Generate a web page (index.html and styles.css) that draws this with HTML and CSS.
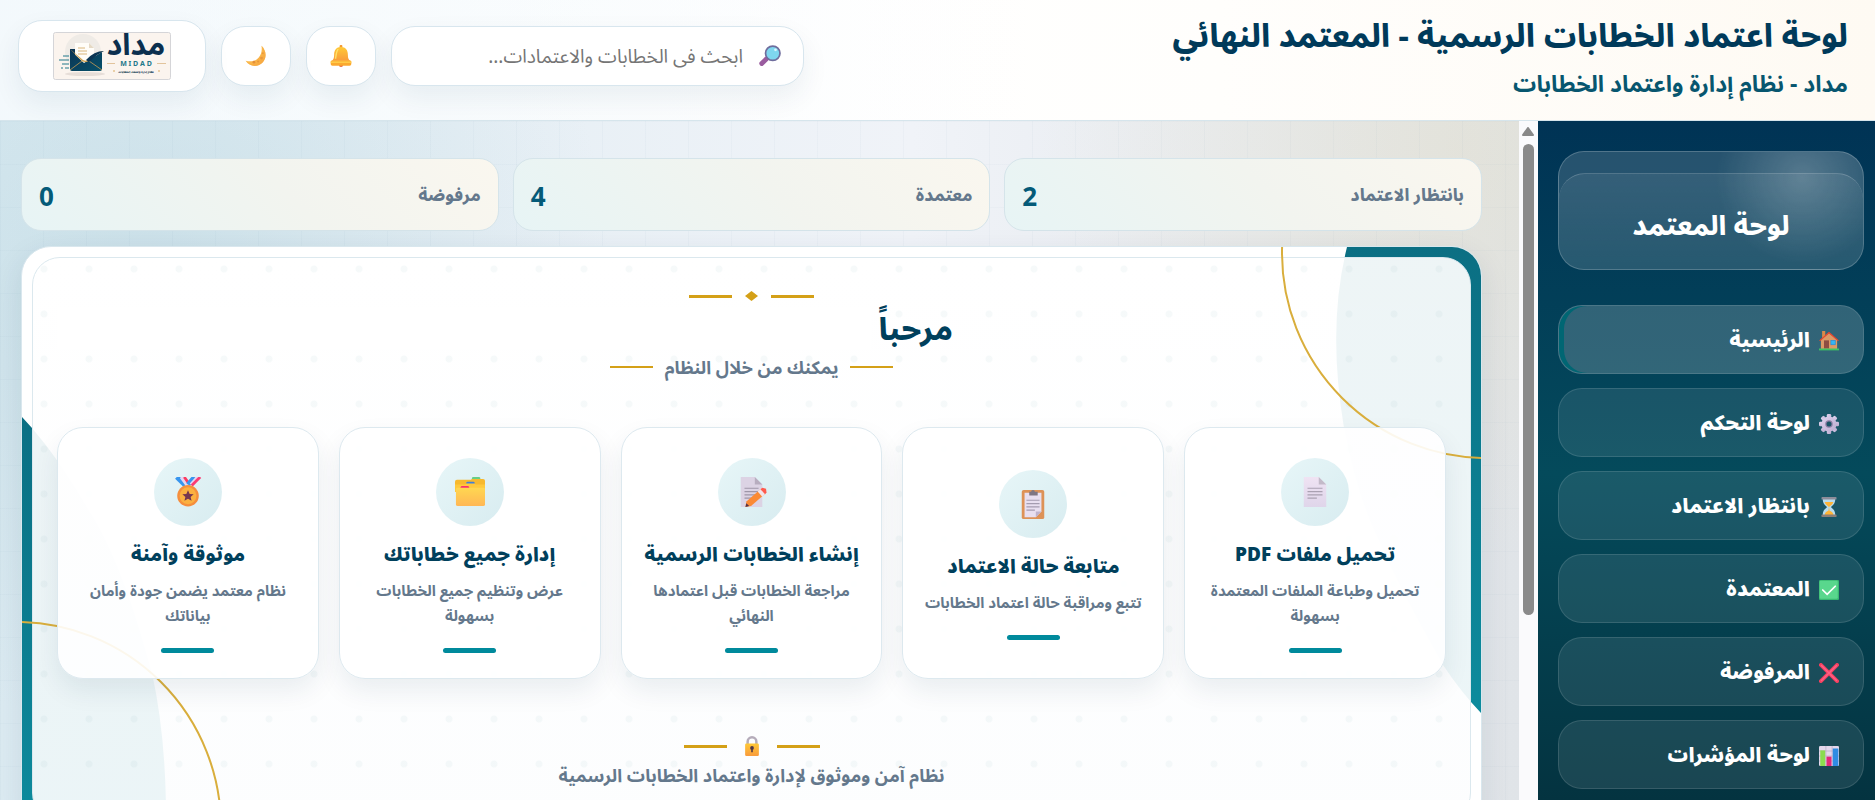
FILE: index.html
```
<!DOCTYPE html>
<html lang="ar" dir="rtl">
<head>
<meta charset="utf-8">
<title>لوحة اعتماد الخطابات الرسمية</title>
<link rel="stylesheet" href="styles.css">
</head>
<body>
<svg class="defs" aria-hidden="true">
  <defs>
    <linearGradient id="gold" x1="0" y1="0" x2="0" y2="1"><stop offset="0" stop-color="#ffc936"/><stop offset="1" stop-color="#f99b3c"/></linearGradient>
    <linearGradient id="folderfill" x1="0" y1="0" x2="0" y2="1"><stop offset="0" stop-color="#ffd751"/><stop offset="1" stop-color="#ffb755"/></linearGradient>
    <linearGradient id="moonfill" x1="0" y1="0" x2="1" y2="1"><stop offset="0" stop-color="#ffd35c"/><stop offset="1" stop-color="#f6a03c"/></linearGradient>
    <linearGradient id="paper" x1="0" y1="0" x2="0" y2="1"><stop offset="0" stop-color="#efe3f3"/><stop offset="1" stop-color="#dfd5ea"/></linearGradient>
    <linearGradient id="lilac" x1="0" y1="0" x2="1" y2="1"><stop offset="0" stop-color="#e0d3ee"/><stop offset="1" stop-color="#b9abcf"/></linearGradient>
    <linearGradient id="teal" x1="0" y1="0" x2="0" y2="1"><stop offset="0" stop-color="#0b6f83"/><stop offset="1" stop-color="#0d8b9d"/></linearGradient>
    <linearGradient id="navy" x1="0" y1="0" x2="1" y2="1"><stop offset="0" stop-color="#0b3554"/><stop offset="1" stop-color="#06506a"/></linearGradient>
  </defs>
  <symbol id="i-moon" viewBox="0 0 32 32"><path d="M24 1c7 7 8 17 2 24S7 33 1 23c9 2 15 0 19-5s5-10 4-17z" fill="url(#moonfill)"/><path d="M24 1c7 7 8 17 2 24S7 33 1 23c8 7 17 7 22 0s5-14 1-22z" fill="#f7ab45" opacity=".6"/><circle cx="13" cy="25" r="2" fill="#e58f3a"/><circle cx="24" cy="19" r="2" fill="#e9973c"/><circle cx="19" cy="24" r="1.5" fill="#e9973c"/><circle cx="26" cy="12" r="1.3" fill="#e9973c"/></symbol>
  <symbol id="i-bell" viewBox="0 0 32 32"><circle cx="16" cy="29" r="3" fill="#e9663c"/><rect x="14" y="0" width="4" height="6" rx="1.5" fill="#f59a2f"/><path d="M16 3C9 3 6 8 6 14c0 5-1 7-3 9h26c-2-2-3-4-3-9 0-6-3-11-10-11z" fill="url(#gold)"/><path d="M12 6c-3 3-3 9-4 14" stroke="#ffe26b" stroke-width="2" fill="none"/><rect x="1" y="22" width="30" height="8" rx="2.5" fill="#fba92f"/><path d="M1 25h30" stroke="#ffd14c" stroke-width="2"/></symbol>
  <symbol id="i-search" viewBox="0 0 32 32"><path d="M11 20l-7 7" stroke="#9a5c9f" stroke-width="7" stroke-linecap="round"/><circle cx="20" cy="12" r="10.5" fill="#7ed6ef" stroke="#6f6d9d" stroke-width="2.5"/><circle cx="24" cy="7" r="2" fill="#d8f5fd"/></symbol>
  <symbol id="i-home" viewBox="0 0 32 32"><rect x="5" y="0" width="5" height="12" fill="#d98a4a"/><path d="M3 14L16 3l13 11v15H3z" fill="#dc9a66"/><path d="M0 15L16 1l16 14-2 1L16 4 2 16z" fill="#e8472f"/><rect x="8" y="15" width="8" height="13" fill="#8f4e42"/><rect x="19" y="15" width="7" height="7" fill="#33b5f5" stroke="#2488d6"/><rect y="28" width="32" height="3" fill="#3fc463"/></symbol>
  <symbol id="i-gear" viewBox="0 0 32 32"><g fill="url(#lilac)"><rect x="12.500" y="0" width="7" height="32" rx="2"/><rect x="0" y="12.500" width="32" height="7" rx="2"/><rect x="12.500" y="0" width="7" height="32" rx="2" transform="rotate(45 16 16)"/><rect x="12.500" y="0" width="7" height="32" rx="2" transform="rotate(-45 16 16)"/><circle cx="16" cy="16" r="12"/></g><circle cx="16" cy="16" r="6" fill="#8c7fa5"/><circle cx="16" cy="16" r="4" fill="#1b5567"/></symbol>
  <symbol id="i-hourglass" viewBox="0 0 32 32"><path d="M6 3h20c0 8-4 10-7 13 3 3 7 5 7 13H6c0-8 4-10 7-13C10 13 6 11 6 3z" fill="#b8dcef"/><path d="M9 8h14c-1 4-4 5-7 8-3-3-6-4-7-8z" fill="#ffb536"/><path d="M16 16l1 6c4 1 6 4 6 7H9c0-3 2-6 6-7z" fill="#ffb536"/><rect x="4" y="0" width="24" height="4" rx="1" fill="#8d8c99"/><rect x="4" y="28" width="24" height="4" rx="1" fill="#8d7f77"/></symbol>
  <symbol id="i-check" viewBox="0 0 32 32"><rect width="32" height="32" rx="2" fill="#38b871"/><rect x="1" y="1" width="29" height="29" rx="2" fill="#59d78d"/><path d="M6 16l7 7L26 10" stroke="#fff" stroke-width="2.8" fill="none" stroke-linecap="round"/></symbol>
  <symbol id="i-cross" viewBox="0 0 32 32"><path d="M3 3l26 26M29 3L3 29" stroke="#f5405f" stroke-width="6" stroke-linecap="round"/><path d="M4 4l24 24M28 4L4 28" stroke="#ff5f86" stroke-width="2.5" stroke-linecap="round"/></symbol>
  <symbol id="i-chart" viewBox="0 0 32 32"><rect width="32" height="32" rx="2" fill="#e4d8ec"/><path d="M0 8h32M0 16h32M0 24h32M11 0v32M21 0v32" stroke="#b5a7c2"/><rect x="2" y="7" width="8" height="25" fill="#8bdc4f"/><rect x="12" y="17" width="8" height="15" fill="#e2297a"/><rect x="22" y="4" width="9" height="28" fill="#2f8ce3"/></symbol>
  <symbol id="i-page" viewBox="0 0 32 32"><path d="M4 0h16l8 8v24H4z" fill="url(#paper)"/><path d="M20 0l8 8h-8z" fill="#c3bac9"/><path d="M8 12h16M8 15.500h16M8 19h16M8 22.500h10" stroke="#aaa1b2" stroke-width="1.300"/></symbol>
  <symbol id="i-clipboard" viewBox="0 0 32 32"><rect x="4" y="1" width="24" height="31" rx="2" fill="#dd9257"/><path d="M7 4h18v20l-6 6H7z" fill="#e8dff0"/><path d="M25 24l-6 6v-6z" fill="#bfb3cd"/><path d="M12 7V3h2a2 2 0 0 1 4 0h3v4z" fill="#7e7683"/><path d="M9 12h14M9 15.500h14M9 19h14M9 22.500h9" stroke="#a49cb0" stroke-width="1.300"/></symbol>
  <symbol id="i-memo" viewBox="0 0 32 32"><path d="M4 0h15l8 8v24H4z" fill="#dcd3e4"/><path d="M19 0l8 8h-8z" fill="#b7adbf"/><path d="M8 12h15M8 15.500h15M8 19h12M8 22.500h8" stroke="#9e96a8" stroke-width="1.300"/><path d="M25 13l5 5-15 13-6 1 1-6z" fill="#fb8a35"/><path d="M22 15.500l4-3.500 5 5-4 4z" fill="#f2e4ea"/><path d="M25 13l2-1.500 4 1 .5 4-1.500 2z" fill="#ff5a4d"/><path d="M10 28l-1 4 4-1z" fill="#54324a"/></symbol>
  <symbol id="i-folder" viewBox="0 0 32 32"><rect x="18" y="0" width="9" height="5" rx="1.500" fill="#66cf86"/><path d="M0 5q0-2 2-2h15l1-1h12q2 0 2 2v10H0z" fill="#f7b92f"/><rect x="12" y="5" width="9" height="4" rx="1.500" fill="#3f7fd8"/><path d="M0 8h11l1-1h9l1 1h10v8H0z" fill="#ffc93c"/><rect x="6" y="9.500" width="9" height="4" rx="1.500" fill="#f8316d"/><path d="M1 13q0-1.500 1.500-1.500h28Q32 11.500 32 13v16q0 2-2 2H3q-2 0-2-2z" fill="url(#folderfill)"/></symbol>
  <symbol id="i-medal" viewBox="0 0 32 32"><path d="M4 0l9 9" stroke="#3795ee" stroke-width="5"/><path d="M9 0l6 8" stroke="#e6d6f3" stroke-width="4"/><path d="M12 0l5 7" stroke="#fb3c60" stroke-width="3"/><path d="M23 0l-7 8" stroke="#3795ee" stroke-width="5"/><path d="M26 0l-7 8" stroke="#e6d6f3" stroke-width="3"/><path d="M29 0l-9 9" stroke="#fb3c73" stroke-width="3"/><circle cx="16" cy="20" r="11.500" fill="#f58e3d"/><circle cx="16" cy="20" r="9" fill="#fbb040"/><path d="M16 14l1.800 4 4.200.4-3.200 2.800 1 4.200-3.800-2.200-3.800 2.200 1-4.200-3.200-2.800 4.200-.4z" fill="#76374f"/></symbol>
  <symbol id="i-lock" viewBox="0 0 32 32"><path d="M9 15V9a7 7 0 0 1 14 0v6" fill="none" stroke="#b5acba" stroke-width="4"/><rect x="5" y="12" width="22" height="20" rx="2" fill="url(#gold)"/><circle cx="16" cy="19" r="3" fill="#4d3546"/><path d="M16 19v7" stroke="#4d3546" stroke-width="2.500"/></symbol>
</svg>

<header class="topbar">
  <div class="heading">
    <h1 class="heading-title">لوحة اعتماد الخطابات الرسمية - المعتمد النهائي</h1>
    <p class="heading-sub">مداد - نظام إدارة واعتماد الخطابات</p>
  </div>
  <div class="tools">
    <label class="search"><svg class="ico"><use href="#i-search"/></svg><input type="search" aria-label="بحث" placeholder="ابحث في الخطابات والاعتمادات..."></label>
    <button class="tool" type="button" aria-label="الإشعارات"><svg class="ico"><use href="#i-bell"/></svg></button>
    <button class="tool" type="button" aria-label="الوضع الليلي"><svg class="ico"><use href="#i-moon"/></svg></button>
    <a class="brand" href="#" aria-label="مداد">
      <svg class="brand-img" viewBox="0 0 118 48" direction="ltr">
        <rect x=".5" y=".5" width="117" height="47" rx="2" fill="#fbf4ee" stroke="#d5d5d8"/>
        <circle cx="30" cy="20" r="18" fill="#efebe6"/>
        <path d="M17 17h5v6h-5z" fill="#0b3554"/>
        <path d="M22 11h14l5 5v16H22z" fill="#fffdf8"/><path d="M36 11l5 5h-5z" fill="#e5d9c5"/>
        <path d="M25 16h7M25 19h9M25 22h9" stroke="#dab67c"/>
        <path d="M17 18l14 13 18-11v17q0 2-2 2H19q-2 0-2-2z" fill="url(#navy)"/>
        <path d="M17 38l12-9M49 38l-13-9" stroke="#c79b52" stroke-width=".8"/>
        <path d="M17 17l12 12q3 2 7 0 8-8 15-10-7 1-13 7-4 4-8 2z" fill="#d3a350"/><path d="M33 28q8-9 18-9l-7 4-8 7z" fill="#0b3554"/>
        <path d="M10 24h6M6 28h10M9 32h7M8 36h2M12 36h4" stroke="#23788a" stroke-width="1"/>
        <ellipse cx="32" cy="42" rx="20" ry="2" fill="#e7ded8"/>
        <text class="brand-name" x="83" y="23">مداد</text>
        <path d="M54 31.500h8M104 31.500h9" stroke="#e2c49c"/>
        <text class="brand-latin" x="83" y="34">M I D A D</text>
        <text class="brand-tag" x="83" y="41">نظام إدارة واعتماد الخطابات</text>
        <circle cx="61" cy="39" r=".8" fill="#d3a350"/><circle cx="106" cy="39" r=".8" fill="#d3a350"/>
      </svg>
    </a>
  </div>
</header>

<div class="shell">
  <aside class="sidebar">
    <div class="hero"><div class="hero-inner">لوحة المعتمد</div></div>
    <nav class="nav">
      <a class="nav-item active" href="#"><svg class="nav-ico"><use href="#i-home"/></svg>الرئيسية</a>
      <a class="nav-item" href="#"><svg class="nav-ico"><use href="#i-gear"/></svg>لوحة التحكم</a>
      <a class="nav-item" href="#"><svg class="nav-ico"><use href="#i-hourglass"/></svg>بانتظار الاعتماد</a>
      <a class="nav-item" href="#"><svg class="nav-ico"><use href="#i-check"/></svg>المعتمدة</a>
      <a class="nav-item" href="#"><svg class="nav-ico"><use href="#i-cross"/></svg>المرفوضة</a>
      <a class="nav-item" href="#"><svg class="nav-ico"><use href="#i-chart"/></svg>لوحة المؤشرات</a>
    </nav>
  </aside>
  <div class="scroll" aria-hidden="true"><svg class="scroll-arrow" viewBox="0 0 12 9"><path d="M6 1l5 7H1z" fill="#888" stroke="#888" stroke-width="2" stroke-linejoin="round"/></svg><div class="scroll-thumb"></div></div>

  <main class="content">
    <section class="stats">
      <div class="stat"><span>بانتظار الاعتماد</span><strong class="stat-num">2</strong></div>
      <div class="stat"><span>معتمدة</span><strong class="stat-num">4</strong></div>
      <div class="stat"><span>مرفوضة</span><strong class="stat-num">0</strong></div>
    </section>

    <section class="panel">
      <svg class="corner corner-end" viewBox="0 0 220 480" aria-hidden="true"><path d="M86 0Q66 80 83 181Q96 250 118 294Q140 345 182 418Q200 445 220 466V0z" fill="url(#teal)"/></svg>
      <svg class="corner corner-start" viewBox="0 0 220 420" aria-hidden="true"><path d="M0 6L10 17Q40 52 68 101Q100 150 130 262Q145 330 144 420H0z" fill="url(#teal)"/></svg>
      <div class="sheet"></div>
      <div class="ring ring-end"></div>
      <div class="ring ring-start"></div>
      <div class="panel-body">
        <div class="rule"><i class="line"></i><svg class="diamond" viewBox="0 0 13 10"><path d="M6.500 0L13 5 6.500 10 0 5z" fill="#d4a017"/></svg><i class="line"></i></div>
        <h2 class="welcome">مرحباً<span class="welcome-name"></span></h2>
        <div class="intro"><i class="line thin"></i><span>يمكنك من خلال النظام</span><i class="line thin"></i></div>
        <div class="cards">
          <article class="card"><div class="disc"><svg class="disc-ico"><use href="#i-page"/></svg></div><h3 class="card-title">تحميل ملفات PDF</h3><p class="card-text">تحميل وطباعة الملفات المعتمدة بسهولة</p><i class="bar"></i></article>
          <article class="card"><div class="disc"><svg class="disc-ico"><use href="#i-clipboard"/></svg></div><h3 class="card-title">متابعة حالة الاعتماد</h3><p class="card-text">تتبع ومراقبة حالة اعتماد الخطابات</p><i class="bar"></i></article>
          <article class="card"><div class="disc"><svg class="disc-ico"><use href="#i-memo"/></svg></div><h3 class="card-title">إنشاء الخطابات الرسمية</h3><p class="card-text">مراجعة الخطابات قبل اعتمادها النهائي</p><i class="bar"></i></article>
          <article class="card"><div class="disc"><svg class="disc-ico"><use href="#i-folder"/></svg></div><h3 class="card-title">إدارة جميع خطاباتك</h3><p class="card-text">عرض وتنظيم جميع الخطابات بسهولة</p><i class="bar"></i></article>
          <article class="card"><div class="disc"><svg class="disc-ico"><use href="#i-medal"/></svg></div><h3 class="card-title">موثوقة وآمنة</h3><p class="card-text">نظام معتمد يضمن جودة وأمان بياناتك</p><i class="bar"></i></article>
        </div>
        <div class="rule secure"><i class="line"></i><svg class="lock"><use href="#i-lock"/></svg><i class="line"></i></div>
        <p class="closing">نظام آمن وموثوق لإدارة واعتماد الخطابات الرسمية</p>
      </div>
    </section>
  </main>
</div>
</body>
</html>
```
FILE: styles.css
```
* { box-sizing: border-box; }
body {
  margin: 0;
  height: 100vh;
  overflow: hidden;
  display: flex;
  flex-direction: column;
  font-family: "Noto Sans", "Noto Sans Arabic", "Noto Kufi Arabic", "DejaVu Sans", sans-serif;
  color: #00405c;
}
h1, h2, h3, p { margin: 0; }
.defs { position: absolute; width: 0; height: 0; }

.topbar {
  flex: none;
  display: flex;
  justify-content: space-between;
  align-items: flex-start;
  height: 121px;
  padding: 13px 27px 0 18px;
  border-bottom: 1px solid #d6e5ec;
  background: linear-gradient(90deg, rgba(240, 246, 250, .6), rgba(240, 246, 250, 0) 55%), linear-gradient(90deg, #f8fdff, #fff 45%, #fffefc 65%, #fefaf3);
}
.heading-title { font-size: 32px; line-height: 44px; font-weight: 800; color: #003a5a; }
.heading-sub { margin-top: 10px; font-size: 23px; line-height: 32px; font-weight: 700; color: #07566f; }
.tools { display: flex; align-items: center; gap: 15px; padding-top: 7px; }
.search, .tool, .brand {
  display: flex;
  align-items: center;
  justify-content: center;
  background: #fff;
  border: 1px solid #d8e6ee;
  border-radius: 24px;
  box-shadow: 0 12px 28px rgba(10, 50, 80, .07);
}
.search { width: 413px; height: 60px; padding: 0 22px; gap: 16px; }
.search input {
  flex: 1;
  min-width: 0;
  padding: 0;
  border: 0;
  outline: 0;
  background: none;
  font-family: inherit;
  font-size: 19px;
}
.search input::placeholder { color: #757575; }
.tool { width: 70px; height: 60px; padding: 0; }
.brand { width: 188px; height: 72px; }
.ico { width: 22px; height: 22px; flex: none; }
.brand-img { width: 118px; height: 48px; overflow: visible; }
.brand-name { font-size: 30px; font-weight: 700; text-anchor: middle; fill: #0b2f4e; }
.brand-latin { font-size: 7px; font-weight: 700; text-anchor: middle; fill: #23788a; }
.brand-tag { font-size: 3px; font-weight: 700; text-anchor: middle; fill: #0b2f4e; }

.shell { flex: 1; min-height: 0; display: flex; }
.sidebar {
  width: 337px;
  flex: none;
  padding: 30px 11px 0 20px;
  background: linear-gradient(180deg, #003355, #044a5b 52%, #043340);
}
.hero {
  height: 119px;
  padding-top: 21px;
  border: 1px solid rgba(255, 255, 255, .2);
  border-radius: 26px;
  overflow: hidden;
  background: radial-gradient(circle at 80% 22%, rgba(255, 255, 255, .22), transparent 86px), rgba(255, 255, 255, .15);
}
.hero-inner {
  height: 97px;
  padding-top: 29px;
  border-top: 1px solid rgba(255, 255, 255, .2);
  border-radius: 26px 26px 0 0;
  background: linear-gradient(180deg, rgba(255, 255, 255, .07), rgba(255, 255, 255, 0));
  color: #fff;
  font-size: 27px;
  line-height: 44px;
  font-weight: 800;
  text-align: center;
}
.nav { display: flex; flex-direction: column; gap: 14px; margin-top: 35px; }
.nav-item {
  display: flex;
  align-items: center;
  gap: 9px;
  height: 69px;
  padding: 2px 24px 0;
  border: 1px solid rgba(255, 255, 255, .12);
  border-radius: 24px;
  background: rgba(255, 255, 255, .09);
  color: #fff;
  font-size: 20px;
  font-weight: 900;
  text-decoration: none;
}
.nav-item.active { background: rgba(255, 255, 255, .19); box-shadow: inset 5px 0 0 #006673; }
.nav-ico { width: 20px; height: 20px; flex: none; }

.scroll { width: 19px; flex: none; padding: 6px 4px 0 4px; background: #fafafc; }
.scroll-arrow { display: block; width: 12px; height: 9px; }
.scroll-thumb { width: 11px; height: 471px; margin-top: 8px; border-radius: 6px; background: #8a8a8a; }

.content {
  flex: 1;
  min-width: 0;
  overflow: hidden;
  padding: 37px 37px 0 21px;
  background:
    repeating-linear-gradient(90deg, rgba(90, 130, 160, .04) 0 1px, transparent 1px 43px),
    repeating-linear-gradient(180deg, rgba(90, 130, 160, .03) 0 1px, transparent 1px 43px),
    radial-gradient(circle at 96% 4%, rgba(230, 220, 185, .3), transparent 420px),
    radial-gradient(circle at 10% 22%, rgba(160, 200, 212, .32), transparent 460px),
    linear-gradient(90deg, #dcebf2, #f0f3f8 60%, #e0e4e8);
}
.stats { display: grid; grid-template-columns: repeat(3, 1fr); gap: 14px; }
.stat {
  display: flex;
  justify-content: space-between;
  align-items: center;
  height: 73px;
  padding: 2px 17px 0;
  border: 1px solid #d5e4ea;
  border-radius: 20px;
  background: linear-gradient(225deg, #faf7ef, #f2f4ef 45%, #e7f4f5);
  color: #64788c;
  font-size: 17px;
  font-weight: 800;
}
.stat-num { font-size: 26px; font-weight: 700; color: #045a78; }

.panel {
  position: relative;
  margin-top: 15px;
  border: 1px solid #d9e7ee;
  border-radius: 30px;
  overflow: hidden;
  background: #fff;
  box-shadow: 0 10px 30px rgba(10, 50, 80, .1);
}
.corner { position: absolute; width: 220px; }
.corner-end { top: 0; right: 0; height: 480px; }
.corner-start { bottom: 0; left: 0; height: 420px; }
.sheet {
  position: absolute;
  inset: 10px;
  border: 1px solid #dbe8ee;
  border-radius: 28px;
  background: radial-gradient(circle at 11px 11px, rgba(0, 100, 110, .035) 3px, transparent 4px) 0 0 / 45px 45px, linear-gradient(180deg, rgba(255, 255, 255, .93), rgba(252, 253, 254, .93));
}
.ring { position: absolute; width: 412px; height: 412px; border: 2px solid #d9ae3c; border-radius: 50%; }
.ring-end { top: -200px; right: -212px; }
.ring-start { bottom: -202px; left: -212px; }
.panel-body { position: relative; padding: 41px 35px 41px; }
.rule, .intro { display: flex; justify-content: center; align-items: center; }
.rule { gap: 12px; height: 16px; }
.line { width: 43px; height: 3px; margin: 0; background: #d4a017; }
.line.thin { height: 2px; }
.diamond { width: 13px; height: 10px; margin: 0 1px; }
.welcome { display: flex; align-items: center; gap: 8px; padding-right: calc(35% + 7px); font-size: 31px; line-height: 48px; font-weight: 800; }
.welcome-name { flex: 1; height: 41px; background: #fff; }
.intro { gap: 12px; font-size: 18px; line-height: 30px; font-weight: 700; color: #64788c; }
.cards { display: grid; grid-template-columns: repeat(5, 1fr); gap: 20px; margin-top: 45px; }
.card {
  display: flex;
  flex-direction: column;
  align-items: center;
  justify-content: center;
  min-height: 252px;
  padding: 29px 17px 25px;
  border: 1px solid #dde9ef;
  border-radius: 26px;
  background: rgba(255, 255, 255, .9);
  box-shadow: 0 12px 26px rgba(10, 50, 80, .08);
  text-align: center;
}
.disc { display: grid; place-items: center; width: 68px; height: 68px; border-radius: 50%; background: linear-gradient(135deg, #e7f6f8, #d8ecf0); }
.disc-ico { width: 30px; height: 30px; }
.card-title { margin-top: 13px; font-size: 19px; line-height: 30px; font-weight: 900; white-space: nowrap; }
.card-text { margin-top: 9px; padding: 0 4px; font-size: 15px; line-height: 25px; font-weight: 700; color: #64788c; }
.bar { width: 53px; height: 5px; margin-top: 20px; border-radius: 3px; background: #008a9c; }
.secure { height: 20px; margin-top: 57px; gap: 14px; }
.lock { width: 22px; height: 20px; }
.closing { margin-top: 4px; font-size: 18px; line-height: 30px; font-weight: 700; color: #64788c; text-align: center; }
```
